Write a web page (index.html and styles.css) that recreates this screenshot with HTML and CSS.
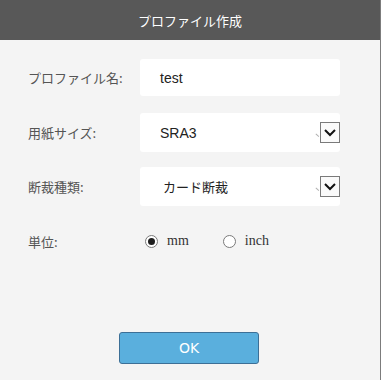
FILE: index.html
```html
<!DOCTYPE html>
<html lang="ja">
<head>
<meta charset="utf-8">
<link rel="stylesheet" href="styles.css">
</head>
<body>
<div class="dialog">
  <div class="header">プロファイル作成</div>
  <div class="form">
    <div class="row r1">
      <div class="label">プロファイル名:</div>
      <div class="field input">test</div>
    </div>
    <div class="row r2">
      <div class="label">用紙サイズ:</div>
      <div class="field select">
        <span class="val">SRA3</span>
        <span class="grip"></span>
        <svg class="arrow" width="20" height="21" viewBox="0 0 20 21"><rect x="0.5" y="0.5" width="19" height="20" fill="#fafafa" stroke="#7a7a7a"/><path d="M5 8 L10 13 L15 8" fill="none" stroke="#111" stroke-width="2"/></svg>
      </div>
    </div>
    <div class="row r3">
      <div class="label">断裁種類:</div>
      <div class="field select">
        <span class="val cjk">カード断裁</span>
        <span class="grip"></span>
        <svg class="arrow" width="20" height="21" viewBox="0 0 20 21"><rect x="0.5" y="0.5" width="19" height="20" fill="#fafafa" stroke="#7a7a7a"/><path d="M5 8 L10 13 L15 8" fill="none" stroke="#111" stroke-width="2"/></svg>
      </div>
    </div>
    <div class="row r4">
      <div class="label">単位:</div>
      <div class="radios">
        <span class="radio on"></span><span class="rlabel">mm</span>
        <span class="radio second"></span><span class="rlabel">inch</span>
      </div>
    </div>
  </div>
  <div class="footer">
    <div class="btn">OK</div>
  </div>
</div>
</body>
</html>
```
FILE: styles.css
```css
html, body {
  margin: 0;
  padding: 0;
  background: #f4f4f4;
}
.dialog {
  width: 380px;
  height: 380px;
  border-right: 1px solid #7c7c7c;
  display: flex;
  flex-direction: column;
  background: #f4f4f4;
  font-family: "Noto Sans CJK JP", "Liberation Sans", sans-serif;
}
.header {
  height: 40px;
  background: #585858;
  color: #ffffff;
  font-size: 13px;
  display: flex;
  align-items: center;
  justify-content: center;
}
.form {
  padding-left: 28px;
  display: flex;
  flex-direction: column;
}
.row {
  display: flex;
  align-items: center;
}
.r1 { margin-top: 19px; }
.r2 { margin-top: 17px; }
.r3 { margin-top: 15px; }
.r4 { margin-top: 25px; }
.label {
  width: 112px;
  font-size: 13px;
  color: #555555;
}
.field {
  width: 200px;
  background: #ffffff;
  border-radius: 3px;
  box-sizing: border-box;
  padding-left: 20px;
  display: flex;
  align-items: center;
  font-family: "Liberation Sans", Arial, sans-serif;
  font-size: 14px;
  color: #222222;
}
.input { height: 37px; }
.select { height: 39px; position: relative; }
.val.cjk {
  font-family: "Noto Sans CJK JP", sans-serif;
  font-size: 13px;
  padding-left: 3px;
}
.arrow {
  position: absolute;
  right: 0;
  top: 9px;
}
.grip {
  position: absolute;
  right: 20px;
  top: 20px;
  width: 4px;
  height: 2px;
  border-bottom: 1px solid #b0b0b0;
  transform: rotate(40deg);
}
.radios {
  display: flex;
  align-items: center;
  padding-left: 5px;
  height: 20px;
  font-family: "Liberation Serif", "Times New Roman", serif;
  font-size: 14px;
  color: #333333;
}
.radio {
  width: 13px;
  height: 13px;
  box-sizing: border-box;
  border: 1px solid #7a7a7a;
  border-radius: 50%;
  background: #ffffff;
  display: flex;
  align-items: center;
  justify-content: center;
}
.radio.on::after {
  content: "";
  width: 7px;
  height: 7px;
  border-radius: 50%;
  background: #1e1e1e;
}
.radio.second { margin-left: 34px; }
.rlabel { margin-left: 9px; }
.footer {
  margin-top: auto;
  padding-bottom: 16px;
  display: flex;
  justify-content: center;
  padding-right: 2px;
}
.btn {
  width: 140px;
  height: 32px;
  box-sizing: border-box;
  background: #5aafdd;
  border: 1px solid #3c6f96;
  border-radius: 3px;
  color: #ffffff;
  font-family: "DejaVu Sans", sans-serif;
  font-size: 14px;
  display: flex;
  align-items: center;
  justify-content: center;
}
```
